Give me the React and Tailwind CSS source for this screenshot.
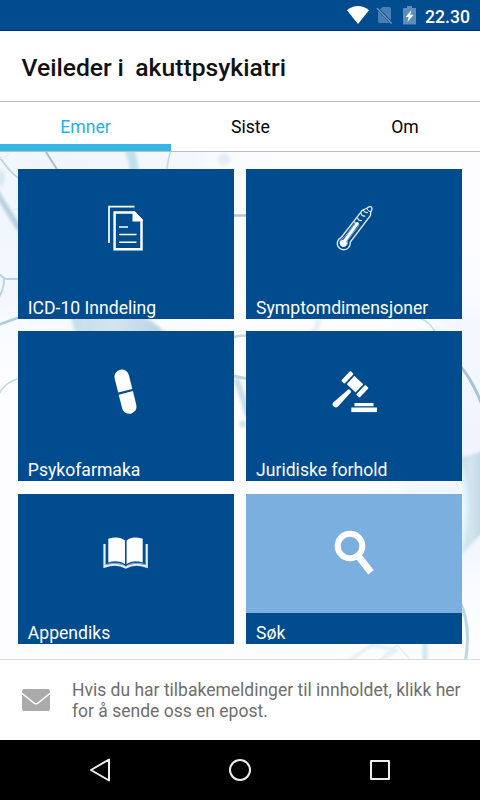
import React from "react";

// ── Status bar icons ──────────────────────────────────────────────────────────
const WifiIcon = () => (
  <svg width="22" height="18" viewBox="0 0 22 18" fill="#fff">
    <path d="M0 4.2Q11-4 22 4.2L11 18Z" />
  </svg>
);

const NoSimIcon = () => (
  <svg width="17" height="19" viewBox="0 0 17 19">
    <path d="M6.500 1h7Q15 1 15 2.500V14.500L4 3.300Z" fill="#4a80b0" />
    <path d="M2 5L13.500 17H3.500Q2 17 2 15.500Z" fill="#4a80b0" />
    <path d="M.8 2L15.600 17.600" stroke="#6a98c0" strokeWidth="1.400" />
  </svg>
);

const BatteryIcon = () => (
  <svg width="13" height="19" viewBox="0 0 13 19">
    <path d="M4 0h5v2h4v16.500H0V2h4Z" fill="#5d8db9" />
    <path d="M8.500 4L2.600 11h3L4.500 16l6-7.200H7.200Z" fill="#fff" />
  </svg>
);

// ── Card icons ────────────────────────────────────────────────────────────────
const DocumentIcon = () => (
  <svg width="80" height="70" viewBox="-4 3 80 70" fill="none" stroke="#fff">
    <path d="M19 53V16.700H44.500" strokeWidth="1.700" />
    <path d="M24.600 22.500H44L51.500 30V59.300H24.600Z" strokeWidth="2.500" />
    <path d="M42.500 21.500H45L52.500 29.500V31.500H42.500Z" fill="#fff" stroke="none" />
    <path d="M29 37h9" stroke="#bcd0e3" strokeWidth="2" />
    <path d="M29 44.500h17.500M29 52.300h17.500" strokeWidth="1.500" />
  </svg>
);

const ThermometerIcon = () => (
  <svg width="80" height="70" viewBox="-6 3 80 70" fill="none" stroke="#e4edf5" strokeLinecap="round">
    <path
      d="M18.500 49.500C15.700 54 18 59 23 59.700C27.500 60.200 30.500 57 30.300 52L50.500 25.500L50.700 22C52.500 19.800 52.500 17.500 50.700 16.700C49 16 47.500 17.500 46.600 18.500L42.500 20L22 46.500Z"
      strokeWidth="1.300"
    />
    <path d="M46.600 18.500Q48 21.500 50.700 22" strokeWidth="1" />
    <path
      d="M31 38.500Q35 31 38 33Q40.500 35 35.500 40L27.500 50.500Q28.500 55.500 24 56.500Q19 56.500 20 50.500L24.500 47Z"
      stroke="#a9c3dc"
      strokeWidth=".8"
    />
    <path d="M37.300 33.500L23.500 52.500" stroke="#fff" strokeWidth="3" />
    <circle cx="23.400" cy="53.300" r="3.500" fill="#fff" stroke="none" />
    <path d="M41 23.500q1 3 4 2.500M37.500 28q1 3 4 2.500M34.500 32q1 2 2.500 2M43.500 20.500q1.500 2.500 4 2" strokeWidth="1.100" />
  </svg>
);

const PillIcon = () => (
  <svg width="80" height="70" viewBox="-4 0 80 70" fill="#fff">
    <g transform="rotate(-14 35.500 35.700)">
      <path d="M28.200 34.700V20.300a7.300 7.300 0 0 1 14.600 0v14.400Z" />
      <path d="M28.200 36.900V51a7.300 7.300 0 0 0 14.600 0V36.900Z" />
    </g>
  </svg>
);

const GavelIcon = () => (
  <svg width="80" height="70" viewBox="-6 0 80 70" fill="#fff">
    <g transform="rotate(43 35.500 28.500)">
      <rect x="22.300" y="22" width="4.700" height="13.500" rx="1" />
      <rect x="28.800" y="23" width="12.200" height="11.300" rx=".6" />
      <rect x="42.800" y="22" width="4.700" height="13.500" rx="1" />
    </g>
    <path d="M28.500 33.300Q30.800 33.500 31.200 36L18 50.500Q15.500 52.500 13.300 50Q11.500 48 13.500 46.200Z" />
    <rect x="34.500" y="47" width="19" height="3.200" />
    <rect x="31.300" y="51.500" width="25.700" height="4.600" />
  </svg>
);

const BookIcon = () => (
  <svg width="80" height="70" viewBox="-4 -2 80 70" fill="#fff">
    <path d="M18.300 18.800Q29 15.500 35 20.500V44Q28.500 39.500 18.300 42.500Z" />
    <path d="M52.700 18.800Q42 15.500 36.600 20.500V44Q42.800 39.500 52.700 42.500Z" />
    <path
      d="M14.500 24V46.600Q27 42.500 35.800 47.500Q44.500 42.500 56.700 46.600V24"
      fill="none"
      stroke="#e8f0f7"
      strokeWidth="2.200"
    />
    <path d="M16 44.500Q29 41 35.800 46.500Q42.500 41 55 44.500" fill="none" stroke="#9fbbd6" strokeWidth="1" />
  </svg>
);

const SearchIcon = () => (
  <svg width="80" height="70" viewBox="-6 -2 80 70" fill="none" stroke="#fff">
    <circle cx="30" cy="26" r="12.300" strokeWidth="6" />
    <path d="M37.300 34.800L51 52.300" strokeWidth="7" />
  </svg>
);

const CARDS = [
  { label: "ICD-10 Inndeling", Icon: DocumentIcon },
  { label: "Symptomdimensjoner", Icon: ThermometerIcon },
  { label: "Psykofarmaka", Icon: PillIcon },
  { label: "Juridiske forhold", Icon: GavelIcon },
  { label: "Appendiks", Icon: BookIcon },
  { label: "Søk", Icon: SearchIcon, highlighted: true },
];

// ── Pale neuron artwork behind the cards ──────────────────────────────────────
const NeuronBackground = () => (
  <svg className="absolute inset-0 h-full w-full" viewBox="0 152 480 507" preserveAspectRatio="none" fill="none">
    <defs>
      <radialGradient id="tint">
        <stop offset="0" stopColor="#f0f5fd" />
        <stop offset=".6" stopColor="#f4f8fe" />
        <stop offset="1" stopColor="#fafcff" stopOpacity="0" />
      </radialGradient>
      <linearGradient id="cell" x1="0" x2="1">
        <stop offset="0" stopColor="#c3dfea" />
        <stop offset=".45" stopColor="#d3e4ee" />
        <stop offset="1" stopColor="#b3cfde" />
      </linearGradient>
      <filter id="soft" x="-20%" y="-20%" width="140%" height="140%" colorInterpolationFilters="sRGB">
        <feGaussianBlur stdDeviation="1.500" />
      </filter>
      <filter id="faint" x="-5%" y="-5%" width="110%" height="110%" colorInterpolationFilters="sRGB">
        <feGaussianBlur stdDeviation=".7" />
      </filter>
    </defs>
    <rect y="152" width="480" height="508" fill="#fdfdff" />
    <ellipse cx="60" cy="190" rx="230" ry="200" fill="url(#tint)" />
    <ellipse cx="470" cy="440" rx="110" ry="200" fill="url(#tint)" />
    <g filter="url(#soft)">
      <path d="M126 142Q134 158 135 176" stroke="#c0e0ed" strokeWidth="9" />
      <path d="M-5 190L20 230" stroke="#b6d0de" strokeWidth="5.500" />
      <path d="M68 312Q78 333 74 344H174Q158 321 134 312Z" fill="url(#cell)" />
      <circle cx="224" cy="159" r="6" fill="#e4edf7" />
      <ellipse cx="1" cy="178" rx="4" ry="8" fill="#dce7f4" />
      <path d="M490 448Q474 456 455 458L459 468Q475 499 459 557L490 525Z" fill="url(#cell)" />
      <path d="M461 468Q473 500 461 552" stroke="#d9f2f9" strokeWidth="4" />
      <path d="M425 638V668" stroke="#cbe7f3" strokeWidth="5" />
      <path d="M345 663L372 645L396 650L378 662" stroke="#dfecf5" strokeWidth="3" />
      <path d="M236 379Q242 393 248 416" stroke="#c8dde7" strokeWidth="6" />
      <circle cx="243" cy="424" r="3.500" fill="#cce3ec" />
      <path d="M314 333L320 318" stroke="#e6f1f7" strokeWidth="6" />
    </g>
    <g filter="url(#faint)">
      <path d="M44 149L60 174" stroke="#a6becd" strokeWidth="2" />
      <path d="M-2 155Q11 174 20 179" stroke="#b7d2e0" strokeWidth="1.600" />
      <path d="M171 149Q168 160 166 174" stroke="#bfd9e6" strokeWidth="1.600" />
      <path d="M-2 273Q3 278 6 279H20M4 279Q4 290-2 299" stroke="#b6d4e2" strokeWidth="1.800" />
      <path d="M-2 325Q9 321 20 317" stroke="#aecddb" strokeWidth="2.500" />
      <path d="M-2 396Q4 382 20 378" stroke="#c3dae5" strokeWidth="1.800" />
      <path d="M230 215.500H250" stroke="#b1c5d1" strokeWidth="2.500" />
      <path d="M230 338.500Q240 334 250 336" stroke="#bfdae4" strokeWidth="2.500" />
      <path d="M230 375Q240 378 250 379" stroke="#bcd5e1" strokeWidth="3" />
      <path d="M420 318Q430 322 436 333" stroke="#c7dee9" strokeWidth="1.800" />
      <path d="M459 365Q471 377 483 407" stroke="#a5c4d4" strokeWidth="3" />
      <path d="M459 600Q472 624 465 664" stroke="#bad7e6" strokeWidth="3" />
      <path d="M12 150Q9 157-2 159M12 210L20 208" stroke="#e1ecf4" />
      <path d="M380 660L397 645L410 659" stroke="#e3eff6" strokeWidth="1.500" />
    </g>
  </svg>
);

const TopicCard = ({ label, Icon, highlighted }) => (
  <div className="relative flex h-[150px] flex-col bg-[#004c8f] text-white">
    <div
      className={`flex h-[119px] shrink-0 items-center justify-center ${
        highlighted ? "bg-[#7aafdf]" : ""
      }`}
    >
      <Icon />
    </div>
    <p className="pl-[9.8px] pt-2.5 text-[17.6px] leading-[21px] whitespace-nowrap">{label}</p>
  </div>
);

const App = () => (
  <div className="flex h-[800px] w-[480px] flex-col overflow-hidden bg-white font-['Roboto',sans-serif]">
    {/* Status bar */}
    <div className="flex h-[31px] shrink-0 items-center justify-end border-b border-[#00267f] bg-[#004c8f] pr-2.5">
      <WifiIcon />
      <div className="ml-[7px]">
        <NoSimIcon />
      </div>
      <div className="ml-2.5">
        <BatteryIcon />
      </div>
      <span className="ml-[9px] pt-[3px] text-[17.6px] leading-5 font-medium text-white">22.30</span>
    </div>

    {/* Title */}
    <header className="flex h-[71px] shrink-0 items-center border-b border-[#bdbdbd] pl-[21.5px]">
      <h1 className="pt-1 text-[24.7px] leading-[30px] font-medium whitespace-pre text-[#111] [word-spacing:-0.4px]">
        {"Veileder i  akuttpsykiatri"}
      </h1>
    </header>

    {/* Tabs */}
    <nav className="flex h-[50px] shrink-0 border-b border-[#bdbdbd] text-center text-[17.6px] leading-[50px] text-black">
      <div className="h-[49px] w-[171px] border-b-[7px] border-[#33b5e5] text-[#1fb0e4]">Emner</div>
      <div className="w-[159px]">Siste</div>
      <div className="w-[150px]">Om</div>
    </nav>

    {/* Topics */}
    <main className="relative h-[508px] shrink-0 border-b border-[#dcdcdc]">
      <NeuronBackground />
      <div className="grid grid-cols-2 gap-x-[12.5px] gap-y-[12.5px] px-[18px] pt-[16.9px]">
        {CARDS.map((card) => (
          <TopicCard key={card.label} {...card} />
        ))}
      </div>
    </main>

    {/* Feedback */}
    <div className="flex h-20 shrink-0 items-center pl-[22px]">
      <svg width="28" height="22" viewBox="0 0 28 22" fill="#aaa">
        <path d="M2 0H26Q28 0 28 2V3.500L15.500 13.500Q14 14.600 12.500 13.500L0 3.500V2Q0 0 2 0Z" />
        <path d="M0 5.300L12 14.900Q14 16.300 16 14.900L28 5.300V20Q28 22 26 22H2Q0 22 0 20Z" />
      </svg>
      <p className="ml-[22px] pt-px text-[17.5px] leading-[21px] whitespace-nowrap text-[#6e6e6e]">
        Hvis du har tilbakemeldinger til innholdet, klikk her
        <br />
        for å sende oss en epost.
      </p>
    </div>

    {/* Android navigation */}
    <div className="flex h-[60px] shrink-0 items-center justify-between bg-black px-[84px]">
      <svg width="32" height="32" viewBox="0 0 32 32" fill="none" stroke="#eee" strokeWidth="2" strokeLinejoin="round">
        <path d="M25 5.500V26.500L7 16Z" />
      </svg>
      <svg width="32" height="32" viewBox="0 0 32 32" fill="none" stroke="#eee" strokeWidth="2">
        <circle cx="16" cy="16" r="10" />
      </svg>
      <svg width="32" height="32" viewBox="0 0 32 32" fill="none" stroke="#eee" strokeWidth="2" strokeLinejoin="round">
        <rect x="7" y="7" width="18" height="18" />
      </svg>
    </div>
  </div>
);

export default App;
